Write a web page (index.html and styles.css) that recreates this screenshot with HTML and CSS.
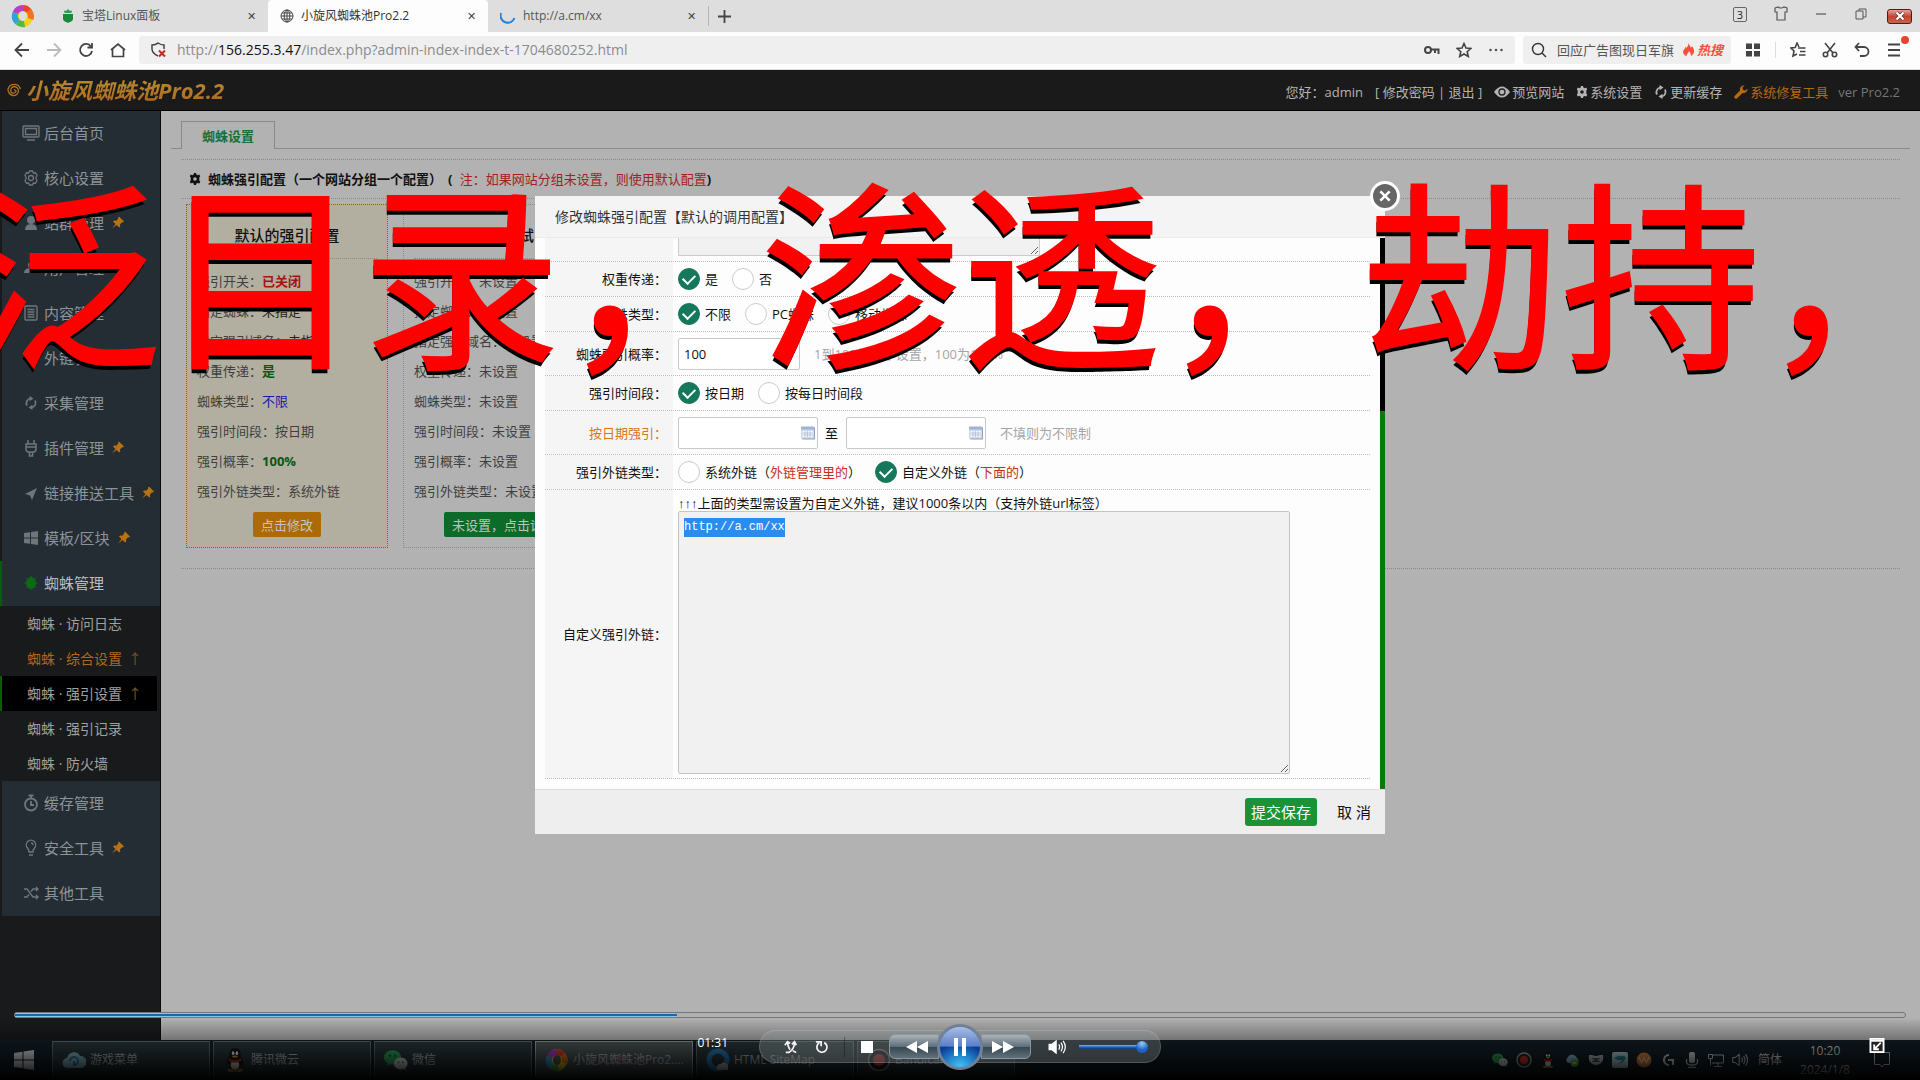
FILE: index.html
```html
<!DOCTYPE html>
<html lang="zh-CN">
<head>
<meta charset="utf-8">
<title>小旋风蜘蛛池Pro2.2</title>
<link rel="stylesheet" href="styles.css">
</head>
<body>
<svg class="defs" aria-hidden="true">
  <defs>
    <symbol id="pin" viewBox="0 0 12 12"><path d="M7 0l5 5-1 1-1-.3L8 8l.2 2-1 1L4.600 8.400 0 12l3.500-4.600L1 5l1-1 2.200.2L6.300 2 6 1z" fill="currentColor"/></symbol>
    <symbol id="gear" viewBox="0 0 12 12"><path fill="currentColor" fill-rule="evenodd" d="M5 0h2l.4 1.600 1.300.6L10.200 1.500l1 1.700L10.300 4.500v3l1 1.300-1 1.700-1.600-.6-1.300.6L7 12H5l-.4-1.600-1.300-.6-1.500.7-1-1.700.9-1.300v-3L.8 3.200l1-1.700 1.500.7 1.300-.6zM6 4.200a1.800 1.800 0 1 0 0 3.600 1.800 1.800 0 0 0 0-3.600z"/></symbol>
    <symbol id="refresh" viewBox="0 0 14 14"><path d="M3 9.500A4.800 4.800 0 0 1 6 2.500M11 4.500a4.800 4.800 0 0 1-3 7" fill="none" stroke="currentColor" stroke-width="1.800"/><path d="M5.500 0l4 2.500-4 2.800zM8.500 14l-4-2.500 4-2.800z" fill="currentColor"/></symbol>
    <symbol id="swirl" viewBox="0 0 24 24"><ellipse cx="12" cy="12" rx="7" ry="8" fill="none" stroke="#f2d31c" stroke-width="6"/><g fill="none" stroke-width="6"><path d="M12 4a8 8 0 0 1 6 3" stroke="#e8452c"/><path d="M18 7a8 8 0 0 1 1.500 8" stroke="#f4731f"/><path d="M13.500 20a8 8 0 0 1-7-2" stroke="#52b947"/><path d="M6.500 18A8 8 0 0 1 4.500 9" stroke="#2da4e0"/><path d="M4.500 9A8 8 0 0 1 12 4" stroke="#b344c8"/></g></symbol>
    <symbol id="penguin" viewBox="0 0 20 28"><ellipse cx="6" cy="26" rx="5" ry="2" fill="#e8a020"/><ellipse cx="14" cy="26" rx="5" ry="2" fill="#e8a020"/><path d="M10 0c5 0 7 4 6.500 9 3 4 4 9 3 11-1 0-1.500-1-2-2-1 5-3 8-7.500 8s-6.500-3-7.500-8c-.5 1-1 2-2 2-1-2 0-7 3-11C3 4 5 0 10 0z" fill="#15181b"/><ellipse cx="10" cy="20" rx="5" ry="5.500" fill="#eee"/><path d="M3 12c4 3 10 3 14 0l.5 3c-5 3-10 3-15 0z" fill="#d8241c"/><ellipse cx="7.800" cy="6" rx="1.500" ry="2.200" fill="#fff"/><ellipse cx="12.200" cy="6" rx="1.500" ry="2.200" fill="#fff"/><ellipse cx="10" cy="10" rx="3.500" ry="1.300" fill="#e8a020"/></symbol>
    <symbol id="wechat" viewBox="0 0 28 24"><ellipse cx="10" cy="9" rx="10" ry="8.500" fill="#2fae60"/><path d="M4 15l-1 4 4-2z" fill="#2fae60"/><circle cx="7" cy="7" r="1.300" fill="#14512e"/><circle cx="13" cy="7" r="1.300" fill="#14512e"/><ellipse cx="19.500" cy="16" rx="8" ry="7" fill="#dfe5e5"/><path d="M24 21l2 3-5-2z" fill="#dfe5e5"/><circle cx="17" cy="14.500" r="1" fill="#666"/><circle cx="22" cy="14.500" r="1" fill="#666"/></symbol>
    <symbol id="calendar" viewBox="0 0 14 14"><rect x="1" y="1" width="13" height="12.500" rx="1" fill="#8fa3bd"/><rect x="0" y="0" width="13" height="12.500" rx="1" fill="#cdd8ea"/><path d="M0 1h13v2.500H0z" fill="#9fb4d6"/><path d="M1.500 5h10v6h-10z" fill="#fff"/><path d="M1.500 7h10M1.500 9h10M4 5v6M6.500 5v6M9 5v6" stroke="#a9b9d3" stroke-width=".8"/></symbol>
    <symbol id="speaker" viewBox="0 0 20 16"><path d="M1 5h3l5-4v14l-5-4H1z" fill="none" stroke="currentColor" stroke-width="1.300"/><path d="M12 5q2 3 0 6M14.500 3q3.500 5 0 10M17 1q5 7 0 14" fill="none" stroke="currentColor" stroke-width="1.300"/></symbol>
  </defs>
</svg>

<header class="browser">
  <div class="tabstrip">
    <svg class="brand" viewBox="0 0 24 24"><use href="#swirl"/></svg>
    <div class="tab tab-first">
      <svg class="fav" viewBox="0 0 14 14"><path d="M2 5h10v5c0 2-3 3-5 4-2-1-5-2-5-4z" fill="#1c8a3a"/><path d="M7 0l2 2 2-.5-.5 2.500h-7L3 1.500 5 2z" fill="#3a9b50"/></svg>
      <span class="tab-title">宝塔Linux面板</span><button class="tab-x" aria-label="关闭">✕</button>
    </div>
    <div class="tab tab-active">
      <svg class="fav" viewBox="0 0 14 14" fill="none" stroke="#444"><circle cx="7" cy="7" r="6"/><ellipse cx="7" cy="7" rx="2.800" ry="6"/><path d="M1 7h12M2 4h10M2 10h10M7 1v12"/></svg>
      <span class="tab-title">小旋风蜘蛛池Pro2.2</span><button class="tab-x" aria-label="关闭">✕</button>
    </div>
    <div class="tab">
      <svg class="fav fav-load" viewBox="0 0 16 16" fill="none" stroke="#2b7fd4" stroke-width="2"><path d="M1 5a7 7 0 0 0 13.500 5"/></svg>
      <span class="tab-title">http://a.cm/xx</span><button class="tab-x" aria-label="关闭">✕</button>
    </div>
    <button class="tab-new" aria-label="新标签"><svg viewBox="0 0 13 13"><path d="M6.500 0v13M0 6.500h13" stroke="#444" stroke-width="1.800"/></svg></button>
    <div class="winbtns">
      <span class="count">3</span>
      <svg class="w16" viewBox="0 0 16 16"><path d="M2 2l3-1q3 2 6 0l3 1v4h-2v8H4V6H2z" fill="none" stroke="#555" stroke-width="1.200"/></svg>
      <svg class="w16" viewBox="0 0 16 16"><path d="M3 8h10" stroke="#555" stroke-width="1.200"/></svg>
      <svg class="w16" viewBox="0 0 16 16"><path d="M3 5h7v8H3zM6 5V3h7v8h-3" fill="none" stroke="#555"/></svg>
      <button class="winclose" aria-label="关闭窗口"><svg viewBox="0 0 10 10"><path d="M1.500 1.500l7 7M8.500 1.500l-7 7" stroke="#6b2a26" stroke-width="3.600"/><path d="M1.500 1.500l7 7M8.500 1.500l-7 7" stroke="#fff" stroke-width="2.200"/></svg></button>
    </div>
  </div>
  <div class="toolbar">
    <div class="navs">
      <svg class="w16" viewBox="0 0 16 16"><path d="M15 8H2M8 1.500L1.500 8 8 14.500" fill="none" stroke="#444" stroke-width="1.800"/></svg>
      <svg class="w16" viewBox="0 0 16 16"><path d="M1 8h13M8 1.500L14.500 8 8 14.500" fill="none" stroke="#bbb" stroke-width="1.800"/></svg>
      <svg class="w16" viewBox="0 0 16 16"><path d="M13 4.500A6 6 0 1 0 14 9M14 1v4.500H9.500" fill="none" stroke="#444" stroke-width="1.800"/></svg>
      <svg class="w16" viewBox="0 0 16 16"><path d="M1 8l7-6 7 6M2.500 7v7.500h11V7" fill="none" stroke="#444" stroke-width="1.700"/></svg>
    </div>
    <div class="address">
      <svg class="w16" viewBox="0 0 16 16"><path d="M7 14Q1 11 1 7V3q4 0 6-2 3 2 6 2v4" fill="none" stroke="#444" stroke-width="1.500"/><path d="M8 8.500l6 6M14 8.500l-6 6" stroke="#c8281e" stroke-width="2"/></svg>
      <span class="url">http://<b>156.255.3.47</b>/index.php?admin-index-index-t-1704680252.html</span>
      <svg class="w16" viewBox="0 0 16 16"><circle cx="4" cy="8" r="3" fill="none" stroke="#444" stroke-width="2"/><path d="M7 7.500h8.500M11 8v3M14.500 8v4" stroke="#444" stroke-width="2"/></svg>
      <svg class="w16" viewBox="0 0 16 16"><path d="M8 1.500l2 4.500 4.800.5-3.600 3.200 1.100 4.800L8 12l-4.300 2.500 1.100-4.800L1.200 6.500 6 6z" fill="none" stroke="#444" stroke-width="1.600"/></svg>
      <svg class="w16" viewBox="0 0 16 16" fill="#555"><circle cx="2.500" cy="8" r="1.300"/><circle cx="8" cy="8" r="1.300"/><circle cx="13.500" cy="8" r="1.300"/></svg>
    </div>
    <div class="search">
      <svg class="w16" viewBox="0 0 16 16"><circle cx="7" cy="7" r="5.500" fill="none" stroke="#333" stroke-width="1.400"/><path d="M11 11l4 4" stroke="#333" stroke-width="1.400"/></svg>
      <span class="search-text">回应广告图现日军旗</span>
      <svg class="flame" viewBox="0 0 14 14"><path d="M7 0c1 3 2 3 2.500 5L11 3.500c2 3 2.500 5 1.500 7.500-.6 1.500-2 2.500-3 3 .5-2-.5-4-2-5.500C7 11 5 11 5 14 2 13 .5 10.500 1.500 8 2.500 6 4 6.500 3.500 4L5 5c1-1 2-2.500 2-5z" fill="#f4503c"/></svg>
      <b class="hot">热搜</b>
    </div>
    <div class="tools">
      <svg class="w16" viewBox="0 0 16 16" fill="#444"><path d="M1 1.500h6v5.500H1zM9 1.500h6v5.500H9zM1 9h6v5.500H1zM9 9h6v5.500H9z"/></svg>
      <i class="vsep"></i>
      <svg class="w16" viewBox="0 0 16 16"><path d="M9 5L7 1 5.200 5.500 1 6l3 3-1 5 4-2" fill="none" stroke="#444" stroke-width="1.600"/><path d="M8 6h7.500M10 9.500h5.500M9 13h6.500" stroke="#444" stroke-width="1.700"/></svg>
      <svg class="w16" viewBox="0 0 16 16" fill="none" stroke="#444" stroke-width="1.600"><path d="M3 1l8 10M13 1L5 11"/><circle cx="3.500" cy="12.500" r="2.200"/><circle cx="12.500" cy="12.500" r="2.200"/></svg>
      <svg class="w16" viewBox="0 0 16 16"><path d="M5 1L1.500 5 5 9M2 5h8a4.500 4.500 0 0 1 0 9H6" fill="none" stroke="#444" stroke-width="1.800"/></svg>
      <span class="menu"><svg class="w16" viewBox="0 0 16 16"><path d="M2 2.500h12M2 8h12M2 13.500h12" stroke="#444" stroke-width="1.900"/></svg></span>
    </div>
  </div>
</header>

<div class="apphead">
  <svg class="spiral" viewBox="0 0 16 16" fill="none" stroke="#b07424" stroke-width="1.300"><path d="M8 8a1.500 1.500 0 0 1 2 1.500A3 3 0 0 1 5 10a4 4 0 0 1 3-5.500A4.500 4.500 0 0 1 12.500 9 5 5 0 0 1 7 13.500 6 6 0 0 1 2 7a6.500 6.500 0 0 1 12.500 0"/></svg>
  <h1 class="logo">小旋风蜘蛛池Pro2.2</h1>
  <nav class="userbar">
    <span class="hello">您好：admin</span>
    <span class="pwd">[ <a href="#">修改密码</a> | <a href="#">退出</a> ]</span>
    <a href="#"><svg class="w16" viewBox="0 0 16 16"><path d="M0 8q8-11 16 0-8 11-16 0z" fill="currentColor"/><circle cx="8" cy="8" r="3" fill="none" stroke="#222" stroke-width="1.300"/></svg>预览网站</a>
    <a href="#"><svg class="w12" viewBox="0 0 12 12"><use href="#gear"/></svg>系统设置</a>
    <a href="#"><svg class="w14" viewBox="0 0 14 14"><use href="#refresh"/></svg>更新缓存</a>
    <a href="#" class="fix"><svg class="w14" viewBox="0 0 14 14"><path d="M13.500 3.500L11.500 5.500 9 5l-.5-2.500L10.500.5A4 4 0 0 0 6 5.500L.8 10.800a1.700 1.700 0 0 0 2.400 2.400L8.500 8a4 4 0 0 0 5-4.500z" fill="currentColor"/></svg>系统修复工具</a>
    <span class="ver">ver Pro2.2</span>
  </nav>
</div>

<div class="app">
  <nav class="side">
    <a class="item" href="#"><svg class="ic" viewBox="0 0 18 18" fill="none" stroke="currentColor" stroke-width="1.400"><rect x="1" y="2" width="16" height="11" rx="1"/><path d="M3.500 4.500h11v6h-11zM5 16h8"/></svg>后台首页</a>
    <a class="item" href="#"><svg class="ic" viewBox="0 0 18 18" fill="none" stroke="currentColor" stroke-width="1.300"><path d="M7.500 2h3l.8 2 2.200-.2 1.500 2.600L13.800 9l1.200 2.600-1.500 2.600-2.200-.2-.8 2h-3l-.8-2-2.200.2L3 11.600 4.200 9 3 6.400l1.500-2.600 2.200.2z"/><circle cx="9" cy="9" r="2.500"/></svg>核心设置</a>
    <a class="item" href="#"><svg class="ic" viewBox="0 0 18 18" fill="currentColor"><circle cx="9" cy="6" r="4"/><path d="M3 16q0-6 6-6t6 6z"/></svg>站群管理<svg class="pin" viewBox="0 0 12 12"><use href="#pin"/></svg></a>
    <a class="item" href="#"><svg class="ic" viewBox="0 0 18 18" fill="currentColor"><circle cx="9" cy="6" r="3"/><path d="M2 14q0-5 7-5t7 5z"/></svg>用户管理</a>
    <a class="item" href="#"><svg class="ic" viewBox="0 0 18 18" fill="none" stroke="currentColor" stroke-width="1.400"><rect x="3" y="2" width="12" height="14" rx="1"/><path d="M5.500 5.500h7M5.500 8h7M5.500 10.500h7M5.500 13h7"/></svg>内容管理</a>
    <a class="item" href="#"><svg class="ic" viewBox="0 0 18 18" fill="none" stroke="currentColor" stroke-width="2"><path d="M8 6l2-2a3 3 0 0 1 4 4l-3 3M10 12l-2 2a3 3 0 0 1-4-4l3-3"/></svg>外链管理</a>
    <a class="item" href="#"><svg class="ic" viewBox="-2 -2 18 18"><use href="#refresh" width="14" height="14"/></svg>采集管理</a>
    <a class="item" href="#"><svg class="ic" viewBox="0 0 18 18" fill="none" stroke="currentColor" stroke-width="1.500"><path d="M6 1v4M12 1v4M4 5h10v5q0 3-3 3H7q-3 0-3-3zM4 8h10M7.500 13v4h3v-4"/></svg>插件管理<svg class="pin" viewBox="0 0 12 12"><use href="#pin"/></svg></a>
    <a class="item" href="#"><svg class="ic" viewBox="0 0 18 18" fill="currentColor"><path d="M15 4L3 10l5 1.500L10 16z"/></svg>链接推送工具<svg class="pin" viewBox="0 0 12 12"><use href="#pin"/></svg></a>
    <a class="item" href="#"><svg class="ic" viewBox="0 0 18 18" fill="currentColor"><path d="M2 4l6-.8v5.300H2zM9 3l7-1v6.500H9zM2 9.500h6v5.300L2 14zM9 9.500h7V16l-7-1z"/></svg>模板/区块<svg class="pin" viewBox="0 0 12 12"><use href="#pin"/></svg></a>
    <a class="item item-on" href="#"><svg class="ic green" viewBox="0 0 18 18" fill="currentColor"><ellipse cx="9" cy="9" rx="5" ry="6"/><path d="M2 9h14M4 4l10 10M14 4L4 14M9 2v14" stroke="currentColor"/></svg>蜘蛛管理</a>
    <div class="sub">
      <a href="#">蜘蛛 · 访问日志</a>
      <a href="#" class="warm">蜘蛛 · 综合设置<i class="up">↑</i></a>
      <a href="#" class="on">蜘蛛 · 强引设置<i class="up">↑</i></a>
      <a href="#">蜘蛛 · 强引记录</a>
      <a href="#">蜘蛛 · 防火墙</a>
    </div>
    <a class="item" href="#"><svg class="ic" viewBox="0 0 18 18" fill="none" stroke="currentColor" stroke-width="1.800"><circle cx="9" cy="10.500" r="6"/><path d="M6.500 1.500h5M9 2v2M9 7v4h3"/></svg>缓存管理</a>
    <a class="item" href="#"><svg class="ic" viewBox="0 0 18 18" fill="none" stroke="currentColor" stroke-width="1.400"><path d="M7 13q0-2-1.500-4a4.700 4.700 0 1 1 7 0Q11 11 11 13zM7 16h4M9 4q2 0 2 2"/></svg>安全工具<svg class="pin" viewBox="0 0 12 12"><use href="#pin"/></svg></a>
    <a class="item" href="#"><svg class="ic" viewBox="0 0 18 18" fill="none" stroke="currentColor" stroke-width="1.400"><path d="M2 5h3l6 8h5M2 13h3l2-2.500M9 7.500L11 5h5M14 3l2 2-2 2M14 11l2 2-2 2"/></svg>其他工具</a>
  </nav>

  <main class="main">
    <div class="tabs"><a class="tabs-on" href="#">蜘蛛设置</a></div>
    <section class="panel">
      <h2 class="panel-title"><svg class="w12" viewBox="0 0 12 12"><use href="#gear"/></svg><span>蜘蛛强引配置（一个网站分组一个配置）<span class="paren">(</span> <em>注：如果网站分组未设置，则使用默认配置</em>)</span></h2>
      <div class="cards">
        <article class="card card-default">
          <h3>默认的强引配置</h3>
          <ul>
            <li>强引开关：<b class="red">已关闭</b></li>
            <li>指定蜘蛛：<span class="dark">未指定</span></li>
            <li>指定强引域名：<span class="dark">未指定</span></li>
            <li>权重传递：<b class="grn">是</b></li>
            <li>蜘蛛类型：<span class="blue">不限</span></li>
            <li>强引时间段：按日期</li>
            <li>强引概率：<b class="grn">100%</b></li>
            <li>强引外链类型：系统外链</li>
          </ul>
          <button class="btn btn-amber">点击修改</button>
        </article>
        <article class="card">
          <h3>分组测试</h3>
          <ul>
            <li>强引开关：未设置</li>
            <li>指定蜘蛛：未设置</li>
            <li>指定强引域名：未设置</li>
            <li>权重传递：未设置</li>
            <li>蜘蛛类型：未设置</li>
            <li>强引时间段：未设置</li>
            <li>强引概率：未设置</li>
            <li>强引外链类型：未设置</li>
          </ul>
          <button class="btn btn-green">未设置，点击设置</button>
        </article>
      </div>
    </section>
  </main>
</div>

<footer class="taskbar">
  <svg class="start" viewBox="0 0 20 20" fill="#e4e8ea"><path d="M0 3l8.500-1.200v7.700H0zM9.500 1.600L20 0v9.500H9.500zM0 10.500h8.500v7.700L0 17zM9.500 10.500H20V20l-10.500-1.600z"/></svg>
  <div class="task"><svg viewBox="0 0 24 24"><path d="M6 20a5 5 0 0 1-1-10 7 7 0 0 1 13-2 6 6 0 0 1 1 12z" fill="#8fc4d6"/><path d="M8 13a4 4 0 1 1 4 4v-4" fill="none" stroke="#2f7ea0" stroke-width="2"/></svg>游戏菜单</div>
  <div class="task"><svg viewBox="0 0 20 28"><use href="#penguin"/></svg>腾讯微云</div>
  <div class="task"><svg viewBox="0 0 28 24"><use href="#wechat"/></svg>微信</div>
  <div class="task task-on"><svg viewBox="0 0 24 24"><use href="#swirl"/></svg>小旋风蜘蛛池Pro2....</div>
  <div class="task"><svg viewBox="0 0 24 24"><circle cx="12" cy="12" r="9" fill="none" stroke="#2a7fc4" stroke-width="5"/><path d="M11 22a4 4 0 0 1 4-6 4 4 0 0 1 7 3v3z" fill="#ccd"/></svg>HTML SiteMap</div>
  <div class="task"><svg viewBox="0 0 24 24"><circle cx="12" cy="12" r="10.500" fill="#181818" stroke="#999" stroke-width="1.500"/><circle cx="12" cy="12" r="6" fill="#e03a34"/></svg>Bandicam</div>
  <div class="tray">
    <svg viewBox="0 0 28 24"><use href="#wechat"/></svg>
    <svg viewBox="0 0 16 16"><circle cx="8" cy="8" r="7" fill="#222" stroke="#aaa" stroke-width="1.500"/><circle cx="8" cy="8" r="4.300" fill="#e2352c"/></svg>
    <svg viewBox="0 0 20 28"><use href="#penguin"/></svg>
    <svg viewBox="0 0 16 16"><path d="M4 11a3.500 3.500 0 0 1 0-6 5 5 0 0 1 9 1 3 3 0 0 1 0 5z" fill="#8bc4e4"/><circle cx="10.500" cy="11" r="4" fill="#65b73c"/><path d="M8.500 11h4" stroke="#fff" stroke-width="1.300"/></svg>
    <svg viewBox="0 0 16 16"><path d="M1 3h3q4 2 8 0h3q1 5-2 8-5 4-10 0Q0 8 1 3z" fill="#b9c0c6"/><path d="M4 6h8v4H4z" fill="#555"/><circle cx="5" cy="8" r="1" fill="#ccc"/><circle cx="11" cy="8" r="1" fill="#ccc"/></svg>
    <svg viewBox="0 0 16 16"><rect width="16" height="16" rx="2" fill="#b9dbe2"/><path d="M2 6q6-4 12-1-2 7-8 7 4-2 4-4-4 1-8-2z" fill="#2c8aa0"/></svg>
    <svg viewBox="0 0 16 16"><circle cx="8" cy="8" r="7.500" fill="#e8883c"/><path d="M3 5l2.500 6L8 6l2.500 5L13 5" fill="none" stroke="#fbd9b0" stroke-width="1.500"/></svg>
    <svg viewBox="0 0 16 16"><path d="M9 3a5 5 0 1 0 0 10M8 8h5v5" fill="none" stroke="#ddd" stroke-width="2.200"/></svg>
    <svg viewBox="0 0 16 16"><rect x="5" y="0" width="6" height="11" rx="2" fill="#ddd"/><path d="M2.500 7v3q0 3 5.500 3t5.500-3V7M4 15.500h8" fill="none" stroke="#ddd" stroke-width="1.300"/></svg>
    <svg viewBox="0 0 16 16" fill="none" stroke="#ddd"><path d="M5 3h10.500v8H4M10 11v3M6 14.500h8M.5 2.500h4v4h-4zM2.500 6.500v7"/></svg>
    <svg viewBox="0 0 20 16" color="#ddd"><use href="#speaker"/></svg>
    <span class="ime">简体</span>
    <span class="clock">10:20<br>2024/1/8</span>
    <svg class="notes" viewBox="0 0 16 16"><path d="M.5.500h15v12H10l-2 2.500-2-2.500H.5z" fill="none" stroke="#ddd"/></svg>
  </div>
</footer>

<div class="modal" role="dialog" aria-labelledby="dlg-title">
  <button class="modal-x" aria-label="关闭"><svg viewBox="0 0 12 12"><path d="M2 2l8 8M10 2l-8 8" stroke="#fff" stroke-width="2.200"/></svg></button>
  <h2 class="modal-head" id="dlg-title">修改蜘蛛强引配置【默认的调用配置】</h2>
  <form class="modal-body" onsubmit="return false">
    <div class="rows">
      <div class="row row-cut"><span class="lab"></span><div class="val"><textarea class="cut" aria-label="强引域名"></textarea></div></div>
      <div class="row"><span class="lab">权重传递：</span><div class="val">
        <label class="opt"><input type="radio" name="w" checked>是</label><label class="opt"><input type="radio" name="w">否</label></div></div>
      <div class="row"><span class="lab">蜘蛛类型：</span><div class="val">
        <label class="opt"><input type="radio" name="t" checked>不限</label><label class="opt"><input type="radio" name="t">PC蜘蛛</label><label class="opt"><input type="radio" name="t">移动蜘蛛</label></div></div>
      <div class="row row-tall"><label class="lab" for="rate">蜘蛛强引概率：</label><div class="val"><input class="box rate" id="rate" type="text" value="100"><span class="hint">1到100的概率设置，100为100%</span></div></div>
      <div class="row"><span class="lab">强引时间段：</span><div class="val">
        <label class="opt"><input type="radio" name="p" checked>按日期</label><label class="opt"><input type="radio" name="p">按每日时间段</label></div></div>
      <div class="row row-tall"><label class="lab lab-warm" for="from">按日期强引：</label><div class="val">
        <span class="date"><input class="box" id="from" type="text"><svg viewBox="0 0 14 14"><use href="#calendar"/></svg></span><label class="to" for="until">至</label><span class="date"><input class="box" id="until" type="text"><svg viewBox="0 0 14 14"><use href="#calendar"/></svg></span><span class="hint">不填则为不限制</span></div></div>
      <div class="row"><span class="lab">强引外链类型：</span><div class="val">
        <label class="opt"><input type="radio" name="l"><span>系统外链（<em>外链管理里的</em>）</span></label><label class="opt"><input type="radio" name="l" checked><span>自定义外链（<em>下面的</em>）</span></label></div></div>
      <div class="row row-area"><label class="lab" for="links">自定义强引外链：</label><div class="val"><p class="tip"><span class="arrows">↑↑↑</span>上面的类型需设置为自定义外链，建议1000条以内（支持外链url标签）</p><textarea class="links" id="links" spellcheck="false">http://a.cm/xx</textarea></div></div>
    </div>
    <div class="scroll"><i class="thumb"></i></div>
  </form>
  <div class="modal-foot"><button class="save">提交保存</button><button class="cancel">取 消</button></div>
</div>

<div class="caption">泛目录，渗透，劫持，</div>

<div class="player">
  <div class="seek"><i class="seek-done" style="width:35%"></i></div>
  <div class="deck">
    <span class="time">01:31</span>
    <div class="pill">
      <svg class="p-mode" viewBox="0 0 16 16" fill="none" stroke="#f2f2f2" stroke-width="2"><path d="M2 14h4q5-3 6-10M4 3q1 6 3 8M10 12q2 2 4 2M9 5l3-3 2 4M1 6l3-4 3 2"/></svg>
      <svg class="p-mode" viewBox="0 0 16 16" fill="none" stroke="#f2f2f2" stroke-width="2"><path d="M10.500 3a5.800 5.800 0 1 1-5.500.2"/><path d="M1 2h6v5" /></svg>
      <i class="p-sep"></i>
      <svg class="p-stop" viewBox="0 0 12 12"><path d="M0 0h12v12H0z" fill="#fff"/></svg>
      <button class="p-skip p-prev" aria-label="上一个"><svg viewBox="0 0 22 12"><path d="M11 0v12L0 6zM22 0v12L11 6z" fill="#fff"/></svg></button>
      <button class="p-pause" aria-label="暂停"><svg viewBox="0 0 16 20"><path d="M2 1h4v18H2zM10 1h4v18h-4z" fill="#fff"/></svg></button>
      <button class="p-skip p-next" aria-label="下一个"><svg viewBox="0 0 22 12"><path d="M0 0l11 6-11 6zM11 0l11 6-11 6z" fill="#fff"/></svg></button>
      <svg class="p-vol" viewBox="0 0 20 16" fill="none" stroke="#fff" stroke-width="1.400"><path d="M1 5h3l5-4v14l-5-4H1z" fill="#fff"/><path d="M12 5q2 3 0 6M14.500 3q3.500 5 0 10M17 1q5 7 0 14"/></svg>
      <input class="p-range" type="range" min="0" max="100" value="100" aria-label="音量">
    </div>
    <svg class="exit" viewBox="0 0 16 16"><rect x="1" y="1" width="14" height="14" fill="#222" stroke="#fff" stroke-width="2"/><path d="M1 3h14" stroke="#fff" stroke-width="2"/><path d="M12 5L6 11M5 7v5h5" fill="none" stroke="#fff" stroke-width="2"/></svg>
  </div>
</div>
<script src="main.js"></script>
</body>
</html>
```
FILE: main.js
```js
const links = document.getElementById('links');
links.focus();
links.select();
```
FILE: styles.css
```css
* { box-sizing: border-box; }
html { height: 100%; }
body {
  margin: 0;
  min-height: 100vh;
  display: flex;
  flex-direction: column;
  position: relative;
  overflow: hidden;
  background: #b2b2b2;
  font: 13px/20px "Open Sans", "Noto Sans CJK SC", sans-serif;
  color: #111;
}
h1, h2, h3, ul, p { margin: 0; padding: 0; }
ul { list-style: none; }
i, em { font-style: normal; }
a { color: inherit; text-decoration: none; }
button { font: inherit; border: 0; padding: 0; background: none; color: inherit; }
svg { flex: none; display: block; }
.defs { position: absolute; width: 0; height: 0; }
.w16 { width: 16px; height: 16px; }
.w14 { width: 14px; height: 14px; }
.w12 { width: 12px; height: 12px; }

/* browser chrome */
.browser { border-bottom: 1px solid #ddd; background: #fdfdfd; }
.tabstrip { display: flex; align-items: center; height: 32px; background: #dedede; font-size: 12px; color: #555; }
.brand { width: 24px; height: 24px; margin: 0 14px 0 11px; }
.tab { display: flex; align-items: center; width: 220px; height: 32px; padding: 0 11px 0 12px; gap: 7px; }
.tab-first { width: 219px; }
.tab-active { background: #fdfdfd; border-radius: 4px 4px 0 0; color: #333; }
.fav { width: 14px; height: 14px; }
.fav-load { width: 16px; height: 16px; }
.tab-title { flex: 1; white-space: nowrap; }
.tab-x { width: 12px; font-size: 11px; color: #444; }
.tab-new { width: 36px; height: 20px; border-left: 1px solid #b5b5b5; display: flex; align-items: center; padding-left: 9px; }
.tab-new svg { width: 13px; height: 13px; }
.winbtns { margin-left: auto; display: flex; align-items: center; gap: 24px; padding: 0 8px 4px 0; }
.count { width: 14px; height: 15px; border: 1px solid #666; border-radius: 2px; font-size: 11px; line-height: 13px; text-align: center; color: #222; margin-right: 2px; }
.winclose { width: 25px; height: 15px; border: 1px solid #5b1512; border-radius: 3px; background: linear-gradient(#e3a49b, #c2452f 50%, #c8644d); display: grid; place-items: center; margin: 4px 0 0 -6px; }
.winclose svg { width: 10px; height: 10px; }
.toolbar { display: flex; align-items: center; height: 37px; padding: 0 18px 2px 0; gap: 8px; }
.navs { display: flex; gap: 16px; padding: 0 12px 0 14px; width: 131px; }
.address { flex: 1; display: flex; align-items: center; gap: 16px; height: 28px; padding: 0 11px 0 12px; background: #efefef; border-radius: 3px; }
.url { flex: 1; font-size: 14px; color: #8b8b8b; margin-left: -6px; }
.url b { font-weight: 400; color: #111; }
.search { display: flex; align-items: center; width: 208px; height: 28px; padding: 0 8px; background: #efefef; border-radius: 3px; white-space: nowrap; }
.search-text { margin: 0 8px 0 10px; color: #555; }
.flame { width: 13px; height: 15px; }
.hot { font-style: italic; color: #f4503c; margin-left: 2px; }
.tools { display: flex; align-items: center; gap: 16px; padding-left: 6px; }
.tools .vsep { width: 1px; height: 16px; background: #ddd; margin: 0 -2px; }
.menu { position: relative; }
.menu::after { content: ""; position: absolute; right: -7px; top: -6px; width: 8px; height: 8px; border-radius: 50%; background: #e8442e; }

/* application header */
.apphead { display: flex; align-items: center; height: 41px; background: #1a1a1a; border-bottom: 1px solid #000; color: #b4b4b4; padding-right: 20px; }
.spiral { width: 16px; height: 16px; margin: 0 4px 0 6px; }
.logo { font-size: 22px; line-height: 40px; font-style: italic; font-weight: 700; color: #b07a26; background: linear-gradient(#b59b3a, #b05c18); -webkit-background-clip: text; background-clip: text; -webkit-text-fill-color: transparent; padding-right: 4px; }
.userbar { margin-left: auto; display: flex; align-items: center; gap: 12px; padding-top: 4px; white-space: nowrap; }
.userbar a { display: inline-flex; align-items: center; gap: 2px; }
.fix { color: #b8690f; }
.ver { color: #777; margin-left: -2px; }

/* sidebar */
.app { flex: 1; display: flex; }
.side { width: 161px; background: #181a1b; border-right: 1px solid #0a0a0a; color: #8d9499; padding-left: 2px; }
.item { display: flex; align-items: center; height: 45px; padding: 0 0 2px 20px; font-size: 15px; background: #252d34; white-space: nowrap; }
.ic { width: 18px; height: 18px; margin-right: 4px; color: #6f767b; }
.item-on { color: #b9bdc0; margin-left: -2px; border-left: 2px solid #0a5c0a; }
.green { color: #0c6b12; }
.pin { width: 12px; height: 13px; margin-left: 8px; color: #b8720f; }
.sub { font-size: 14px; color: #a0a0a0; }
.sub a { display: flex; align-items: center; height: 35px; padding-left: 25px; }
.sub .warm { color: #b4661a; }
.sub .on { background: #000; margin: 0 3px 0 -2px; border-left: 2px solid #0a5c0a; }
.up { margin-left: 6px; color: #7d5327; }

/* content */
.main { flex: 1; padding: 10px 20px 0 10px; }
.tabs { display: flex; height: 28px; padding-left: 10px; border-bottom: 1px solid #8a8a8a; margin-right: -10px; }
.tabs-on { width: 94px; height: 28px; border: 1px solid #8a8a8a; border-bottom: 0; background: #b2b2b2; text-align: center; line-height: 28px; font-weight: 700; color: #177036; }
.panel { margin: 10px 0 0 10px; border-top: 1px dotted #8a8a8a; border-bottom: 1px dotted #8a8a8a; padding-bottom: 20px; }
.panel-title { display: flex; align-items: center; gap: 7px; height: 39px; padding-left: 8px; font-size: 13px; border-bottom: 1px dotted #8a8a8a; white-space: nowrap; }
.panel-title em { font-weight: 400; color: #a3211c; }
.paren { margin: 0 4px 0 6px; }
.cards { display: flex; gap: 15px; padding: 5px 0 0 5px; }
.card { width: 202px; height: 344px; border: 1px dotted #8a8a8a; display: flex; flex-direction: column; align-items: center; color: #3f3f3f; }
.card-default { border-color: #a8561c; background: #b2afa0; }
.card h3 { width: 180px; height: 54px; padding-top: 20px; font-size: 15px; font-weight: 500; line-height: 20px; text-align: center; border-bottom: 1px dotted #8a8a8a; color: #111; }
.card ul { width: 180px; margin-top: 7px; }
.card li { height: 30px; line-height: 30px; white-space: nowrap; }
.red { color: #a8130c; }
.dark { color: #222; }
.grn { color: #0b560f; }
.blue { color: #1818a8; }
.btn { height: 25px; padding: 0 8px; margin-top: 6px; border-radius: 2px; color: #c2c2c2; }
.btn-amber { background: #ad6b08; }
.btn-green { background: #0d6b29; }

/* dialog */
.modal { position: absolute; top: 196px; left: calc(50% - 425px); width: 850px; background: #fdfdfd; }
.modal-x { position: absolute; top: -15px; right: -15px; width: 30px; height: 30px; border: 3px solid #fff; border-radius: 50%; background: #666; display: grid; place-items: center; }
.modal-x svg { width: 14px; height: 14px; }
.modal-head { height: 42px; padding-left: 20px; line-height: 42px; font-size: 14px; font-weight: 400; color: #333; background: #f4f4f4; border-bottom: 1px solid #eaeaea; }
.modal-body { display: flex; }
.rows { flex: 1; padding: 0 10px 10px; }
.row { display: flex; height: 35px; border-bottom: 1px dotted #bbb; }
.row-cut { height: 24px; }
.row-tall { height: 44px; }
.row-area { height: 289px; }
.lab { width: 128px; padding-right: 6px; display: flex; align-items: center; justify-content: flex-end; background: #f5f5f5; white-space: nowrap; }
.lab-warm { color: #d9761a; }
.val { flex: 1; display: flex; align-items: center; padding-left: 5px; white-space: nowrap; }
.row-cut .val { align-items: flex-start; }
.row-area .val { flex-direction: column; align-items: flex-start; }
.opt { display: flex; align-items: center; gap: 5px; margin-right: 14px; }
.opt input { appearance: none; margin: 0; width: 22px; height: 22px; border: 1px solid #ccc; border-radius: 50%; background: #fff; display: grid; place-items: center; }
.opt input:checked { background: #16785a; border-color: #16785a; }
.opt input:checked::after { content: ""; width: 10px; height: 6px; border: solid #fff; border-width: 0 0 2px 2px; transform: translateY(-1px) rotate(-45deg); }
.opt em { color: #c4301c; }
.box { width: 140px; height: 32px; padding: 0 5px; border: 1px solid #c8c8c8; border-radius: 2px; background: #fff; font: inherit; color: #111; }
.rate { width: 122px; }
.hint { margin-left: 14px; color: #a5a5a5; }
.date { position: relative; display: flex; }
.date svg { position: absolute; right: 3px; top: 9px; width: 14px; height: 14px; }
.to { margin: 0 8px 0 7px; }
.cut { width: 362px; height: 18px; resize: both; border: 1px solid #ccc; border-top: 0; background: #f1f1f1; min-height: 0; padding: 0; }
.tip { padding-top: 3px; height: 21px; line-height: 20px; }
.arrows { font-family: "Liberation Sans", sans-serif; }
.links { width: 612px; height: 263px; padding: 6px 5px; border: 1px solid #c4c4c4; border-radius: 2px; background: #f1f1f1; font: 12px/19px "Liberation Mono", monospace; outline: 0; color: #111; caret-color: transparent; }
.links::selection { background: #2b8cf0; color: #fff; }
.scroll { width: 5px; background: #000; padding-top: 173px; display: flex; }
.thumb { flex: 1; background: #067a0e; }
.modal-foot { display: flex; justify-content: flex-end; align-items: center; gap: 20px; height: 45px; padding-right: 14px; border-top: 1px solid #ddd; background: #eee; font-size: 15px; }
.save { width: 72px; height: 28px; border-radius: 3px; background: #199336; color: #fff; }

/* running caption */
.caption { position: absolute; left: -39px; top: 116px; font: 200px/300px "Noto Sans CJK SC", sans-serif; color: #f00; white-space: nowrap; text-shadow: -1px 5px 0 #000; -webkit-text-stroke: 2px #f00; pointer-events: none; }

/* taskbar */
.taskbar { display: flex; align-items: center; height: 40px; padding: 1px 30px 1px 14px; gap: 3px; background: #14212a; color: #b8bfc3; font-size: 12px; }
.start { width: 20px; height: 20px; margin-right: 15px; }
.task { width: 158px; height: 38px; display: flex; align-items: center; gap: 4px; padding-left: 9px; border: 1px solid #60706f; background: #2c3a3e; white-space: nowrap; overflow: hidden; }
.task svg { width: 24px; height: 24px; }
.task-on { background: #505a5a; border-color: #a0a8a8; }
.tray { margin-left: auto; display: flex; align-items: center; gap: 8px; color: #ddd; }
.tray svg { width: 16px; height: 16px; }
.ime { margin-left: 2px; }
.clock { width: 70px; text-align: center; line-height: 19px; }
.tray .notes { margin-left: 6px; }

/* media player overlay */
.player { position: absolute; left: 0; right: 0; bottom: 0; height: 68px; background: linear-gradient(transparent 6px, #000); }
.seek { height: 6px; margin: 0 14px; border: 1px solid #777; border-radius: 3px; background: #b0b0b0; }
.seek-done { display: block; height: 4px; background: linear-gradient(#8cc4ee 1px, #1c64ac 1px, #1c64ac 3px, #8cc4ee 3px); }
.deck { display: grid; grid-template-columns: 1fr auto 1fr; margin-top: 12px; }
.time { justify-self: end; margin: 4px 31px 0 0; font-size: 12px; color: #fff; line-height: 18px; }
.pill { width: 402px; height: 33px; display: flex; align-items: center; padding-left: 24px; border: 1px solid #ffffff28; border-radius: 17px; background: #96a0a04d; }
.p-mode { width: 14px; height: 14px; margin-right: 17px; }
.p-sep { width: 1px; height: 20px; background: #00000050; margin: 0 16px 0 -2px; }
.p-stop { width: 12px; height: 12px; margin-right: 16px; }
.p-skip { width: 50px; height: 25px; display: grid; place-items: center; background: linear-gradient(#aab4ba, #5f6f7a 50%, #34444e 50%, #5f717c); border: 1px solid #8a969c; }
.p-skip svg { width: 22px; height: 12px; }
.p-prev { border-radius: 6px 0 0 6px; padding-left: 6px; }
.p-next { border-radius: 0 6px 6px 0; padding-right: 6px; }
.p-pause { width: 46px; height: 46px; margin: -7px -2px; border: 3px solid #6f8098; border-radius: 50%; display: grid; place-items: center; background: radial-gradient(circle at 50% 100%, #3ec4f4, transparent 55%), linear-gradient(#a9bde6, #5c7fc8 48%, #0a3c94 50%, #0c56b4); z-index: 1; }
.p-pause svg { width: 16px; height: 20px; }
.p-vol { width: 20px; height: 14px; margin: 0 12px 0 16px; }
.p-range { appearance: none; width: 69px; height: 12px; margin: 0; background: linear-gradient(transparent 4px, #7fb4ec 4px, #2b64b4 6px, #123a78 8px, transparent 8px); }
.p-range::-webkit-slider-thumb { appearance: none; width: 12px; height: 12px; border-radius: 50%; background: radial-gradient(circle at 50% 20%, #9ccaf8, #1b62c4 60%); }
.exit { width: 16px; height: 15px; justify-self: end; margin: 8px 35px 0 0; }
```
